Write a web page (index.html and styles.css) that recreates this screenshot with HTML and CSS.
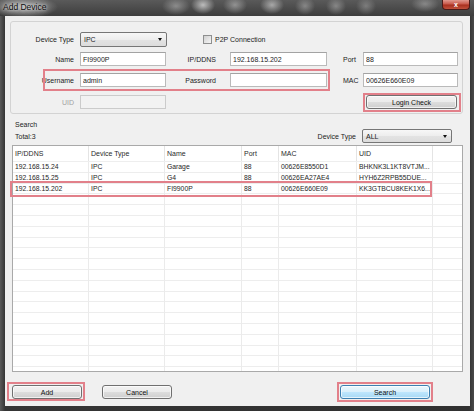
FILE: index.html
```html
<!DOCTYPE html>
<html>
<head>
<meta charset="utf-8">
<title>Add Device</title>
<link rel="stylesheet" href="styles.css">
</head>
<body>
<div class="window">
  <header class="titlebar">
    <span class="title">Add Device</span>
    <span class="close">x</span>
  </header>
  <div class="frame">
    <main class="client">
      <div class="group">
        <div class="row r1">
          <label class="lbl l1">Device Type</label>
          <div class="combo c-type"><span>IPC</span><i class="arrow"></i></div>
          <span class="check"></span><span class="check-lbl">P2P Connection</span>
        </div>
        <div class="row r2">
          <label class="lbl l1">Name</label><input class="field f1" value="FI9900P" readonly>
          <label class="lbl l2">IP/DDNS</label><input class="field f2" value="192.168.15.202" readonly>
          <label class="lbl l3">Port</label><input class="field f3" value="88" readonly>
        </div>
        <div class="row r3">
          <label class="lbl l1">Username</label><input class="field f1" value="admin" readonly>
          <label class="lbl l2">Password</label><input class="field f2" value="" readonly>
          <label class="lbl l3">MAC</label><input class="field f3" value="00626E660E09" readonly>
          <span class="mark mark-user"></span>
        </div>
        <div class="row r4">
          <label class="lbl l1 dis">UID</label><input class="field f1" value="" disabled>
          <button class="btn login">Login Check</button>
          <span class="mark mark-login"></span>
        </div>
      </div>

      <div class="search-head">
        <div class="search-info">
          <div>Search</div>
          <div>Total:3</div>
        </div>
        <div class="filter">
          <label class="lbl">Device Type</label>
          <div class="combo c-all"><span>ALL</span><i class="arrow"></i></div>
        </div>
      </div>

      <div class="table-wrap">
        <div class="table">
          <div class="thead">
            <span>IP/DDNS</span><span>Device Type</span><span>Name</span><span>Port</span><span>MAC</span><span>UID</span><span></span>
          </div>
          <div class="tbody">
            <div class="trow"><span>192.168.15.24</span><span>IPC</span><span>Garage</span><span>88</span><span>00626E8550D1</span><span>BHKNK3L1KT8VTJM...</span><span></span></div>
            <div class="trow"><span>192.168.15.25</span><span>IPC</span><span>G4</span><span>88</span><span>00626EA27AE4</span><span>HYH6Z2RPB55DUE...</span><span></span></div>
            <div class="trow"><span>192.168.15.202</span><span>IPC</span><span>FI9900P</span><span>88</span><span>00626E660E09</span><span>KK3GTBCU8KEK1X6...</span><span></span></div>
          </div>
        </div>
        <span class="mark mark-row"></span>
      </div>

      <div class="actions">
        <button class="btn btn-add">Add</button>
        <button class="btn btn-cancel">Cancel</button>
        <button class="btn btn-search default">Search</button>
        <span class="mark mark-add"></span>
        <span class="mark mark-search"></span>
      </div>
    </main>
  </div>
</div>
</body>
</html>
```
FILE: styles.css
```css
* { box-sizing: border-box; }
html, body { margin: 0; padding: 0; }
body {
  background: #2a2a2a;
  font-family: "Liberation Sans", Arial, sans-serif;
  font-size: 7px;
  color: #1c1c1c;
}
.window {
  width: 474px;
  height: 411px;
  display: flex;
  flex-direction: column;
  overflow: hidden;
  background: linear-gradient(90deg, #5a5a5a 0, #353535 5px, #303030 469px, #4a4a4a 474px);
}
.titlebar {
  height: 16px;
  flex: none;
  display: flex;
  align-items: flex-start;
  background:
    radial-gradient(ellipse 34px 11px at 24px 7px, rgba(205,205,205,.8), rgba(205,205,205,0)),
    radial-gradient(ellipse 14px 9px at 176px 6px, rgba(190,190,190,.55), rgba(190,190,190,0)),
    radial-gradient(ellipse 12px 9px at 203px 5px, rgba(225,225,225,.75), rgba(225,225,225,0)),
    radial-gradient(ellipse 12px 9px at 235px 5px, rgba(200,200,200,.55), rgba(200,200,200,0)),
    radial-gradient(ellipse 12px 9px at 272px 5px, rgba(215,215,215,.65), rgba(215,215,215,0)),
    radial-gradient(ellipse 10px 9px at 305px 6px, rgba(190,190,190,.5), rgba(190,190,190,0)),
    radial-gradient(ellipse 10px 9px at 336px 6px, rgba(190,190,190,.5), rgba(190,190,190,0)),
    radial-gradient(ellipse 10px 9px at 366px 6px, rgba(180,180,180,.45), rgba(180,180,180,0)),
    radial-gradient(ellipse 14px 8px at 425px 4px, rgba(200,200,200,.45), rgba(200,200,200,0)),
    linear-gradient(#5a5a5a, #3d3d3d);
}
.title {
  margin: 2px 0 0 3px;
  font-size: 8.5px;
  line-height: 11px;
  color: #0d0d0d;
  text-shadow: 0 0 3px #e8e8e8, 0 0 6px #d0d0d0;
}
.close {
  margin-left: auto;
  margin-right: 4px;
  width: 28px;
  height: 10px;
  border: 1px solid #4a1a18;
  border-top: 0;
  border-radius: 0 0 4px 4px;
  background: linear-gradient(#e0998f, #c9584a 45%, #a8301f 55%, #c0503c);
  color: #fff;
  font-size: 7px;
  font-weight: bold;
  text-align: center;
  line-height: 9px;
}
.frame {
  flex: 1;
  display: flex;
  padding: 0 4px 5px 5px;
  min-height: 0;
}
.client {
  flex: 1;
  background: #f0f0f0;
  display: flex;
  flex-direction: column;
  padding-top: 5px;
  min-height: 0;
}

/* group box */
.group {
  flex: none;
  margin-left: 5px;
  width: 453px;
  height: 93px;
  border: 1px solid #d3d3d3;
  border-radius: 3px;
  padding-top: 7px;
}
.row {
  display: flex;
  align-items: center;
  position: relative;
}
.r1, .r2 { height: 20px; }
.r3, .r4 { height: 22px; }
.lbl { flex: none; white-space: nowrap; }
.l1 { width: 63px; text-align: right; margin-right: 6px; }
.l2 { width: 50px; text-align: right; margin-right: 14px; }
.l3 { width: 20px; margin-left: 16px; }
.dis { color: #a2a2a2; }

.field {
  flex: none;
  height: 14px;
  margin: 0;
  padding: 0 0 0 2px;
  border: 1px solid #bababa;
  border-top-color: #a3a3a3;
  background: #fff;
  font-family: "Liberation Sans", Arial, sans-serif;
  font-size: 7px;
  color: #1c1c1c;
  outline: none;
}
.f1 { width: 86px; }
.f2 { width: 97px; }
.f3 { width: 95px; }
.field:disabled { background: #f2f2f2; border-color: #cbcbcb; }

.combo {
  flex: none;
  display: flex;
  align-items: center;
  height: 15px;
  padding-left: 3px;
  border: 1px solid #767676;
  border-radius: 2px;
  background: linear-gradient(#f7f7f7, #ededed 50%, #e3e3e3 51%, #dcdcdc);
}
.c-type { width: 87px; }
.arrow {
  margin-left: auto;
  margin-right: 4px;
  width: 0;
  height: 0;
  border-left: 2.5px solid transparent;
  border-right: 2.5px solid transparent;
  border-top: 3px solid #111;
}
.check {
  flex: none;
  width: 9px;
  height: 9px;
  margin-left: 36px;
  border: 1px solid #8e8f8f;
  background: linear-gradient(135deg, #d0d0d0, #f6f6f6);
}
.check-lbl { margin-left: 3px; }

.btn {
  flex: none;
  height: 14px;
  margin: 0;
  padding: 0;
  border: 1px solid #707070;
  border-radius: 3px;
  background: linear-gradient(#f2f2f2, #ebebeb 50%, #dddddd 51%, #cfcfcf);
  box-shadow: inset 0 0 0 1px rgba(255,255,255,.7);
  font-family: "Liberation Sans", Arial, sans-serif;
  font-size: 7px;
  color: #111;
}
.btn.default {
  border-color: #3c7fb1;
  background: linear-gradient(#eaf6fd, #d9f0fc 50%, #bee6fd 51%, #a7d9f5);
}
.login { width: 91px; margin-left: 200px; }

.mark {
  position: absolute;
  border: 2px solid #e2808a;
  pointer-events: none;
}
.mark-user { left: 32px; top: 0; width: 287px; height: 22px; }
.mark-login { left: 352px; top: 2px; width: 98px; height: 19px; }

/* search section */
.search-head {
  flex: none;
  display: flex;
  height: 31px;
  padding-left: 10px;
  padding-right: 18px;
}
.search-info { padding-top: 5px; line-height: 12px; }
.filter {
  margin-left: auto;
  align-self: flex-end;
  margin-bottom: 2px;
  display: flex;
  align-items: center;
}
.filter .lbl { margin-right: 6px; }
.c-all { width: 90px; height: 14px; }

.table-wrap {
  flex: none;
  position: relative;
  margin-left: 7px;
  width: 451px;
  height: 227px;
}
.table {
  height: 100%;
  border: 1px solid #a9a9a9;
  background: #fff;
  overflow: hidden;
  display: flex;
  flex-direction: column;
}
.thead, .trow {
  display: grid;
  grid-template-columns: 76px 76px 77px 37px 78px 76px 1fr;
}
.thead {
  flex: none;
  height: 16px;
  line-height: 15px;
  color: #2a2a2a;
  border-bottom: 1px solid #eeeeee;
}
.thead span {
  padding-left: 2px;
  border-right: 1px solid #e4e4e4;
  white-space: nowrap;
}
.thead span:last-child { border-right: 0; }
.tbody {
  flex: 1;
  font-size: 6.8px;
  color: #262626;
  background:
    linear-gradient(90deg,
      transparent 75px, #ebebeb 75px, #ebebeb 76px,
      transparent 76px, transparent 151px, #ebebeb 151px, #ebebeb 152px,
      transparent 152px, transparent 228px, #ebebeb 228px, #ebebeb 229px,
      transparent 229px, transparent 265px, #ebebeb 265px, #ebebeb 266px,
      transparent 266px, transparent 343px, #ebebeb 343px, #ebebeb 344px,
      transparent 344px, transparent 419px, #ebebeb 419px, #ebebeb 420px,
      transparent 420px),
    repeating-linear-gradient(180deg, transparent 0, transparent 9.8px, #ededed 9.8px, #ededed 10.8px);
}
.trow { height: 10.8px; line-height: 10.8px; }
.trow span {
  padding-left: 2px;
  white-space: nowrap;
  overflow: hidden;
}
.mark-row { left: -2px; top: 36px; width: 422px; height: 16px; }

/* bottom buttons */
.actions {
  flex: 1;
  position: relative;
  display: flex;
  align-items: flex-start;
  padding-top: 13px;
  padding-left: 7px;
}
.btn-add { width: 70px; }
.btn-cancel { width: 70px; margin-left: 20px; }
.btn-search { width: 90px; margin-left: 168px; }
.mark-add { left: 2px; top: 10px; width: 78px; height: 19px; }
.mark-search { left: 332px; top: 10px; width: 96px; height: 20px; }
```
